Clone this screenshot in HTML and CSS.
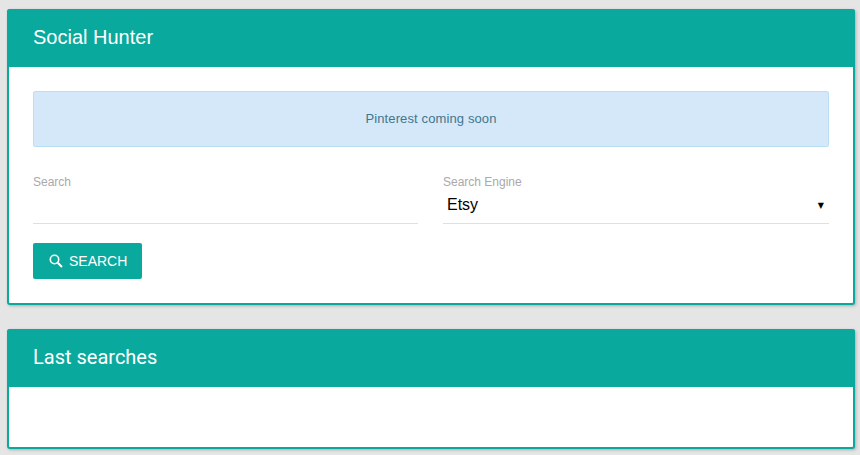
FILE: index.html
```html
<!DOCTYPE html>
<html lang="en">
<head>
    <meta charset="UTF-8">
    <title>Social Hunter</title>
    <link rel="stylesheet" href="styles.css">
</head>
<body>
    <div class="panel">
        <div class="panel-header">
            <h2 class="title-arial">Social Hunter</h2>
        </div>
        <div class="panel-body">
            <div class="alert">Pinterest coming soon</div>
            <div class="form-row">
                <div class="field field-search">
                    <label>Search</label>
                    <div class="input"></div>
                </div>
                <div class="field">
                    <label>Search Engine</label>
                    <div class="input select">
                        <span>Etsy</span>
                        <span class="arrow">▼</span>
                    </div>
                </div>
            </div>
            <button class="btn">
                <svg width="14" height="14" viewBox="0 0 14 14" fill="none" stroke="currentColor">
                    <circle cx="5.5" cy="5.5" r="4.2" stroke-width="1.6"/>
                    <path d="M8.7 8.7L13 13" stroke-width="2"/>
                </svg>
                Search
            </button>
        </div>
    </div>

    <div class="panel panel-last">
        <div class="panel-header">
            <h2>Last searches</h2>
        </div>
        <div class="panel-body empty"></div>
    </div>
</body>
</html>
```

FILE: styles.css
```css
body {
    margin: 0;
    padding: 9px 5px 0 7px;
    background-color: #e5e5e5;
    font-family: Roboto, sans-serif;
    overflow: hidden;
}
.panel {
    border: 2px solid #0aa99e;
    border-top: 0;
    border-radius: 3px;
    background-color: #fff;
    box-shadow: 1px 1px 3px rgba(0, 0, 0, 0.25);
    margin-bottom: 24px;
}
.panel-header {
    background-color: #0aa99e;
    height: 56px;
    margin: 0 -2px;
    border-radius: 3px 3px 0 0;
    padding: 0 26px 2px;
    display: flex;
    align-items: center;
}
.panel-header h2 {
    margin: 0;
    font-size: 20px;
    font-weight: 400;
    color: #fff;
}
.panel-header .title-arial {
    font-family: "Liberation Sans", Arial, sans-serif;
}
.panel-body {
    padding: 24px 24px 24px;
}
.panel-body.empty {
    height: 60px;
    padding: 0;
}
.alert {
    height: 54px;
    line-height: 54px;
    background-color: #d4e8f9;
    border: 1px solid #b8e0f5;
    border-radius: 2px;
    text-align: center;
    font-family: "Liberation Sans", Arial, sans-serif;
    font-size: 13px;
    letter-spacing: 0.12px;
    color: #41768f;
}
.form-row {
    display: flex;
    gap: 25px;
    margin-top: 28px;
}
.field {
    flex: 1;
}
.field-search {
    flex: 0 0 385px;
}
.field label {
    display: block;
    font-family: "Liberation Sans", Arial, sans-serif;
    font-size: 12px;
    line-height: 14px;
    color: #a9a9a9;
}
.input {
    height: 34px;
    border-bottom: 1px solid #e0e0e0;
}
.select {
    display: flex;
    justify-content: space-between;
    align-items: center;
    height: 32px;
    padding: 0 5px 2px 4px;
    font-family: "Liberation Sans", Arial, sans-serif;
    font-size: 16px;
    color: #000;
}
.arrow {
    font-size: 8px;
    font-family: "DejaVu Sans", sans-serif;
}
.btn {
    display: flex;
    align-items: center;
    gap: 6px;
    margin-top: 19px;
    height: 36px;
    padding: 0 15px 0 16px;
    background-color: #0aa99e;
    color: #fff;
    border: none;
    border-radius: 2px;
    font-family: "Liberation Sans", Arial, sans-serif;
    font-size: 14px;
    text-transform: uppercase;
}
```
